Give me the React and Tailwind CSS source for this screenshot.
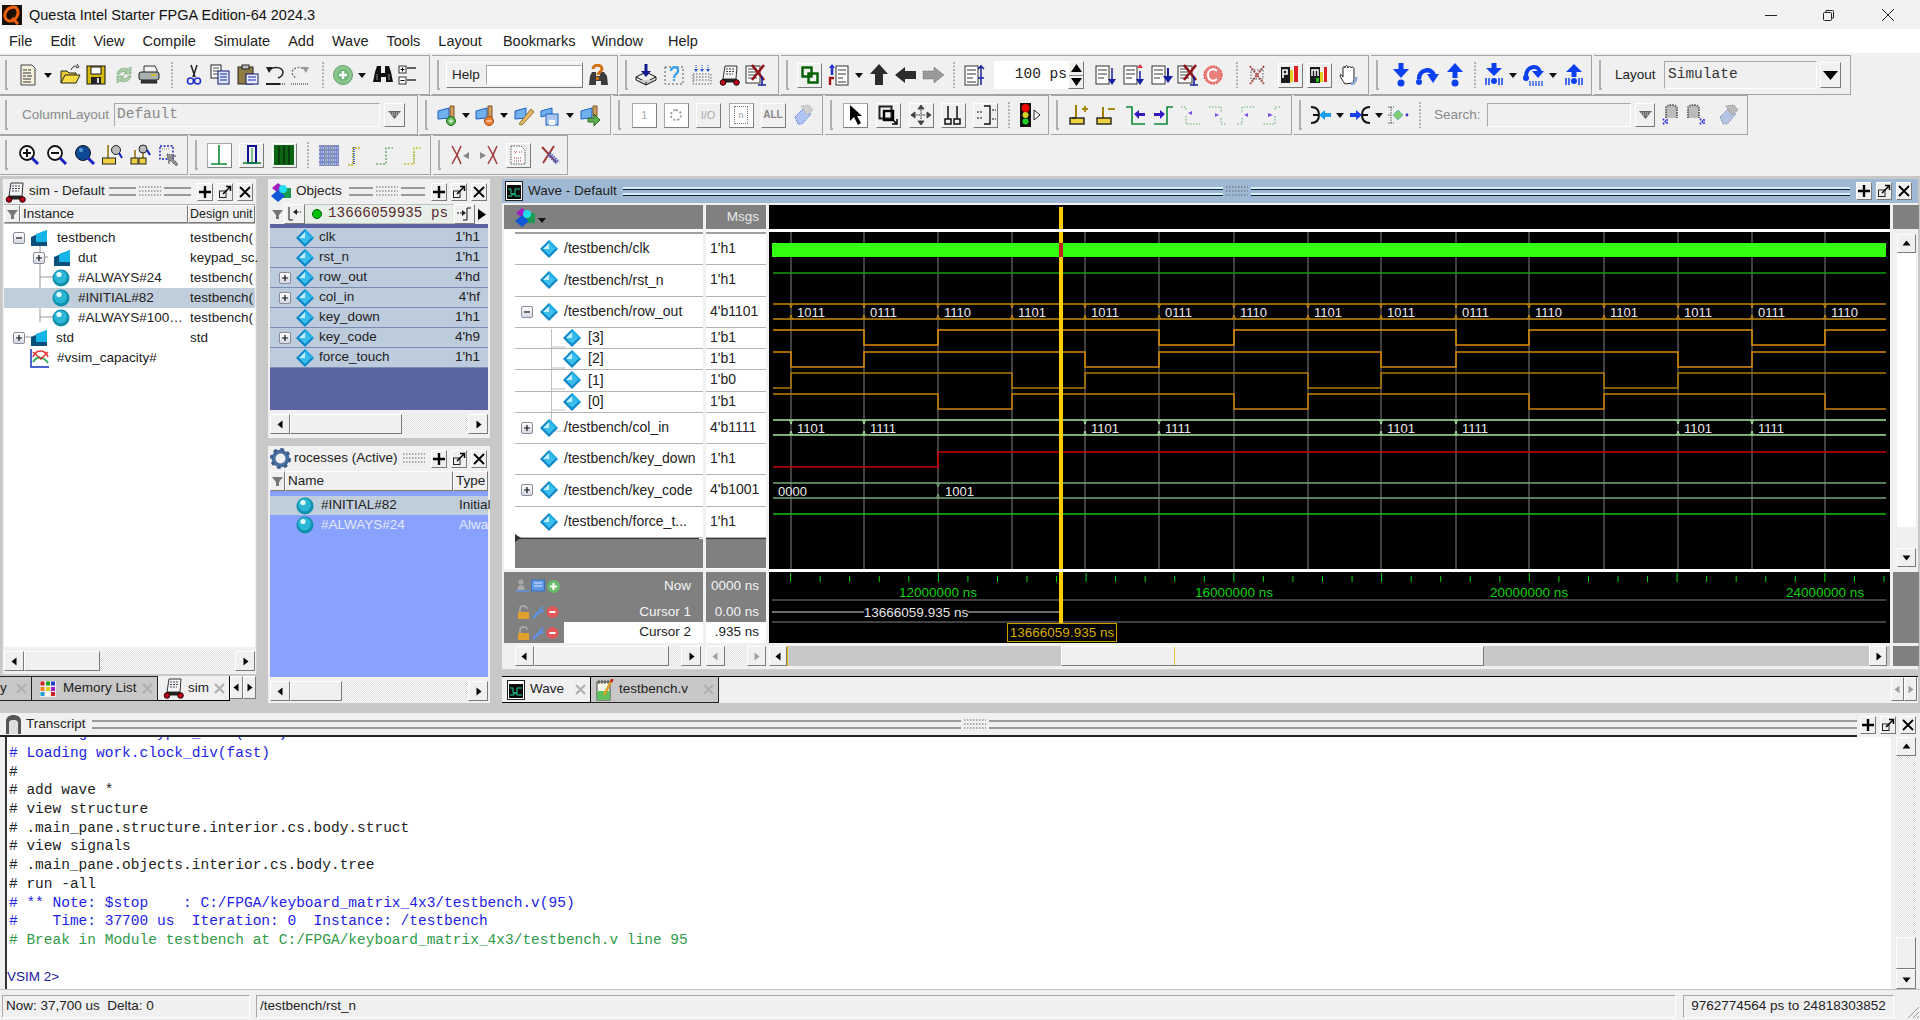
import React from 'react';

const Svg = ({ w = 22, h = 22, children }) => (
  <svg width={w} height={h} viewBox={`0 0 ${w} ${h}`} className="block flex-none">{children}</svg>
);

const raised = 'border border-t-white border-l-white border-r-[#7a7a7a] border-b-[#7a7a7a] bg-[#f0f0f0]';
const sunken = 'border border-t-[#a8a8a8] border-l-[#a8a8a8] border-r-white border-b-white';
const dither = 'bg-[repeating-conic-gradient(#ffffff_0_25%,#dcdcdc_0_50%)] bg-[length:2px_2px]';

const Diamond = () => (
  <Svg w={18} h={18}>
    <polygon points="9,0 18,9 9,18 0,9" fill="#0c86c8" />
    <polygon points="9,0 18,9 9,9" fill="#1fb0ea" />
    <polygon points="9,3 15,9 9,15 3,9" fill="#3dbdec" />
    <polygon points="3,9 9,3 9,9" fill="#c2f0ff" />
  </Svg>
);

const Ball = () => (
  <Svg w={18} h={18}>
    <circle cx="9" cy="9" r="8.5" fill="#0f8fac" />
    <circle cx="8.5" cy="8" r="6.5" fill="#2cb6d6" />
    <circle cx="7" cy="5.5" r="2.6" fill="#e4fbff" />
  </Svg>
);

const Cube = () => (
  <Svg w={17} h={17}>
    <polygon points="16,0 16,16 0,16 0,7" fill="#0a4f7c" />
    <polygon points="5,4 16,0 16,12 5,12" fill="#15b4e6" />
  </Svg>
);

const Expander = ({ minus }) => (
  <div className="w-[12px] h-[12px] flex-none rounded-[2px] border border-[#8a8a9a] bg-gradient-to-b from-white to-[#d4d8e4] flex items-center justify-center">
    <svg width="8" height="8" viewBox="0 0 8 8" className="block">
      <path d={minus ? 'M1 4h6' : 'M1 4h6M4 1v6'} stroke="#111" strokeWidth="1.2" />
    </svg>
  </div>
);

const Cart = () => (
  <Svg w={21} h={22}>
    <path d="M6 2h12l-1 13H4z" fill="#f5f5f5" stroke="#333" />
    <path d="M7 5h8M7 7.5h8M7 10h7" stroke="#445" strokeDasharray="2 1" />
    <path d="M4 15l-1 3h15l-1-3" fill="#222" stroke="#222" />
    <circle cx="4" cy="18.5" r="2.8" fill="#c00018" stroke="#200" />
    <circle cx="17.5" cy="18.5" r="2.8" fill="#c00018" stroke="#200" />
  </Svg>
);

const ObjIcon = () => (
  <Svg w={22} h={22}>
    <polygon points="8,2 14,7 8,12 2,7" fill="#a020c0" />
    <rect x="11" y="7" width="10" height="10" fill="#1c9a50" />
    <polygon points="8,9 15,15 8,21 1,15" fill="#1058d8" />
    <circle cx="13" cy="8" r="4" fill="#20e0f0" />
  </Svg>
);

const Gear = () => (
  <Svg w={21} h={21}>
    <circle cx="10.5" cy="10.5" r="7" fill="none" stroke="#4a6ea0" strokeWidth="4" />
    <circle cx="10.5" cy="10.5" r="9" fill="none" stroke="#3a5a8c" strokeWidth="3" strokeDasharray="3.5 3.5" />
    <circle cx="10.5" cy="10.5" r="2.6" fill="#f0f0f0" />
  </Svg>
);

const WaveIcon = () => (
  <Svg w={18} h={20}>
    <rect x="0.5" y="0.5" width="17" height="19" fill="#fff" stroke="#222" />
    <rect x="2" y="4" width="14" height="14" fill="#0a0a0a" />
    <path d="M3 8h3v5h4V8h5M3 15h4v-2h3v2h5" stroke="#22d090" fill="none" />
  </Svg>
);

const MiniBtn = ({ k }) => (
  <div className={`w-[16px] h-[18px] flex items-center justify-center flex-none ${raised}`}>
    {k === 'plus' && (
      <svg width="12" height="12" viewBox="0 0 12 12" className="block"><path d="M6 0v12M0 6h12" stroke="#000" strokeWidth="2.4" /></svg>
    )}
    {k === 'pop' && (
      <svg width="14" height="14" viewBox="0 0 14 14" className="block">
        <rect x="1.5" y="6" width="6.5" height="6.5" fill="none" stroke="#222" />
        <path d="M5 9l7-7M8 1.5h4.5V6" stroke="#000" strokeWidth="1.5" fill="none" />
      </svg>
    )}
    {k === 'x' && (
      <svg width="12" height="12" viewBox="0 0 12 12" className="block"><path d="M1 1l10 10M11 1L1 11" stroke="#000" strokeWidth="1.8" /></svg>
    )}
  </div>
);

const Buttons = () => (
  <div className="flex gap-[4px] flex-none">
    <MiniBtn k="plus" />
    <MiniBtn k="pop" />
    <MiniBtn k="x" />
  </div>
);

const DotPatch = () => (
  <svg width="22" height="11" viewBox="0 0 22 11" className="block flex-none">
    {[1, 5, 9].map((y) => (
      <path key={y} d={`M0 ${y}H22`} stroke="#666" strokeDasharray="1.5 1.5" />
    ))}
  </svg>
);

const GripLine = () => (
  <div className="flex-1 h-[9px] flex flex-col justify-between">
    <div className="h-[2px] bg-[#9a9a9a]" />
    <div className="h-[2px] bg-[#9a9a9a]" />
  </div>
);

const TitleGrip = ({ cls }) => (
  <div className={`flex items-center gap-[3px] ${cls}`}>
    <GripLine />
    <DotPatch />
    <GripLine />
  </div>
);

const BlueLine = () => (
  <div className="flex-1 h-[9px] flex flex-col justify-between">
    <div className="h-[3px] bg-[#d6f0ff] border-b border-[#14202c]" />
    <div className="h-[3px] bg-[#d6f0ff] border-b border-[#14202c]" />
  </div>
);

const Arrow = ({ dir, dim, cls = 'w-[19px] h-[19px]' }) => (
  <div className={`flex items-center justify-center flex-none ${raised} ${cls}`}>
    <svg width="9" height="9" viewBox="0 0 9 9" className="block">
      <polygon
        fill={dim ? '#a0a0a0' : '#000'}
        points={{ l: '6.5,0.5 6.5,8.5 1.5,4.5', r: '2.5,0.5 2.5,8.5 7.5,4.5', u: '0.5,6.5 8.5,6.5 4.5,1.5', d: '0.5,2.5 8.5,2.5 4.5,7.5' }[dir]}
      />
    </svg>
  </div>
);

const Dropdown = ({ k = 'dim', cls = 'w-[21px] h-[24px]' }) => (
  <div className={`flex items-center justify-center flex-none ${raised} ${cls}`}>
    {k === 'dim' ? (
      <svg width="13" height="8" viewBox="0 0 13 8" className="block"><polygon points="0,0 13,0 6.5,8" fill="#666" /><path d="M2 2h9M4 4h5" stroke="#ddd" strokeDasharray="1 1" /></svg>
    ) : (
      <svg width="15" height="9" viewBox="0 0 15 9" className="block"><polygon points="0,0 15,0 7.5,9" fill="#000" /></svg>
    )}
  </div>
);

// toolbar icons, roughly 22px boxes
const IC = {
  none: () => null,
  caret: () => <Svg w={8} h={5}><polygon points="0,0 8,0 4,5" fill="#111" /></Svg>,
  sep: () => <Svg w={2} h={26}><path d="M1 0v26" stroke="#777" strokeDasharray="2 1.5" /></Svg>,
  doc: () => (
    <Svg><path d="M4 1h11l3 3v17H4z" fill="#f5f0dc" stroke="#444" /><path d="M6 6h4M11 6h3M6 9h8M6 12h3M10 12h5M6 15h8M6 18h8" stroke="#333" /></Svg>
  ),
  open: () => (
    <Svg><path d="M2 19V7h6l2 2h7v3" fill="#e8cc30" stroke="#222" /><path d="M2 19l4-8h15l-4 8z" fill="#f6dc40" stroke="#222" /><path d="M12 6c1-3 3-4 6-4M18 0l2 3-3 1" stroke="#333" fill="none" /></Svg>
  ),
  save: () => (
    <Svg><rect x="2" y="2" width="18" height="18" fill="#d6bc08" stroke="#111" /><rect x="6" y="3" width="10" height="7" fill="#fff" stroke="#111" /><rect x="6" y="13" width="10" height="7" fill="#222" /><rect x="12" y="14" width="2" height="5" fill="#ddd" /></Svg>
  ),
  reload: () => (
    <Svg><path d="M4 10c1-5 6-7 11-5l3-2v7h-7l2-2c-3-1-6 0-7 3z" fill="#a8cca8" stroke="#7aa87a" strokeDasharray="1.5 1" /><path d="M18 12c-1 5-6 7-11 5l-3 2v-7h7l-2 2c3 1 6 0 7-3z" fill="#a8cca8" stroke="#7aa87a" strokeDasharray="1.5 1" /></Svg>
  ),
  print: () => (
    <Svg><path d="M6 8V2h11l2 4v2" fill="#f4f4f4" stroke="#333" /><rect x="1" y="8" width="20" height="8" rx="2" fill="#aab0b0" stroke="#222" /><path d="M4 16l-1 3h16l-1-3" fill="#333" stroke="#222" /><rect x="13" y="10" width="5" height="2" fill="#d4c020" /></Svg>
  ),
  cut: () => (
    <Svg><path d="M8 1l4 12M14 1l-4 12" stroke="#222" strokeWidth="1.5" /><circle cx="7.5" cy="17" r="3" fill="none" stroke="#2030d0" strokeWidth="1.6" /><circle cx="14.5" cy="17" r="3" fill="none" stroke="#2030d0" strokeWidth="1.6" /></Svg>
  ),
  copy: () => (
    <Svg><rect x="2" y="1" width="10" height="13" fill="#fff" stroke="#222" /><path d="M4 4h6M4 7h6M4 10h5" stroke="#444" /><rect x="9" y="7" width="11" height="13" fill="#dce8ff" stroke="#12126a" /><path d="M11 10h7M11 13h7M11 16h7" stroke="#1420a0" /></Svg>
  ),
  paste: () => (
    <Svg><rect x="1" y="3" width="15" height="17" fill="#8f7d44" stroke="#222" /><rect x="5" y="1" width="7" height="4" fill="#bbb" stroke="#222" /><rect x="9" y="10" width="12" height="10" fill="#e8f0ff" stroke="#11116a" /><path d="M11 13h8M11 16h8" stroke="#1420a0" /></Svg>
  ),
  undo: () => (
    <Svg><path d="M5 6c5-4 13-3 14 2 0 3-2 5-5 6" fill="none" stroke="#222" strokeWidth="1.5" /><polygon points="2,3 9,3 5,9" fill="#222" /><path d="M2 20h14" stroke="#222" strokeWidth="2" /><path d="M16 20h5" stroke="#777" strokeDasharray="1 1" strokeWidth="2" /></Svg>
  ),
  redo: () => (
    <Svg><path d="M17 6C12 2 4 3 3 8c0 3 2 5 5 6" fill="none" stroke="#777" strokeDasharray="2 1.5" strokeWidth="1.4" /><polygon points="20,3 13,3 17,9" fill="#999" /><path d="M2 20h18" stroke="#888" strokeDasharray="1 1" strokeWidth="2" /></Svg>
  ),
  add: () => (
    <Svg><circle cx="11" cy="11" r="9.5" fill="#8cc68c" stroke="#5f9f6f" /><circle cx="11" cy="11" r="6" fill="#72b87c" /><path d="M7 11h8M11 7v8" stroke="#fff" strokeWidth="2.4" /></Svg>
  ),
  binoc: () => (
    <Svg><path d="M3 8l2-6h4v7h4V2h4l2 6 2 10h-7V13H9v5H1z" fill="#111" /><path d="M5 10v6M17 10v6" stroke="#888" /></Svg>
  ),
  tree: () => (
    <Svg><rect x="2" y="2" width="7" height="7" fill="#fff" stroke="#333" /><path d="M3.5 5.5h4M5.5 3.5v4" stroke="#000" /><rect x="2" y="13" width="7" height="7" fill="#fff" stroke="#333" /><path d="M3.5 16.5h4" stroke="#000" /><path d="M10 4h9M10 16h9" stroke="#333" strokeWidth="1.4" /></Svg>
  ),
  helpb: () => (
    <Svg><path d="M3 12l2-4h4v4h4V8h4l3 4 1 9h-7v-4H9v4H2z" fill="#3c3c3c" /><path d="M6 5c0-5 9-5 9 0 0 3-4 3-4 6" fill="none" stroke="#d07010" strokeWidth="3" /><rect x="9" y="13" width="3" height="3" fill="#d07010" /></Svg>
  ),
  compile: () => (
    <Svg><path d="M1 13l10-5 10 5-10 5z" fill="#eee" stroke="#111" /><path d="M1 16l10 5 10-5M1 13v3M21 13v3M11 18v3" fill="#ccc" stroke="#111" /><path d="M11 0v10" stroke="#111a90" strokeWidth="3" /><polygon points="6,7 16,7 11,13" fill="#111a90" /></Svg>
  ),
  qbox: () => (
    <Svg><rect x="2" y="3" width="18" height="17" fill="none" stroke="#555" strokeDasharray="2 2" /><path d="M8 7c0-5 8-5 7 0 0 3-4 3-4 7" fill="none" stroke="#38a0f0" strokeWidth="2.4" /><rect x="10" y="15" width="2" height="2" fill="#38a0f0" /></Svg>
  ),
  dotgrid: () => (
    <Svg>
      <path d="M5 1v4M11 1v4M17 1v4" stroke="#2050d0" strokeDasharray="1 1" /><polygon points="3,5 7,5 5,8" fill="#2050d0" /><polygon points="9,5 13,5 11,8" fill="#2050d0" /><polygon points="15,5 19,5 17,8" fill="#2050d0" />
      <rect x="2" y="10" width="18" height="10" fill="none" stroke="#666" strokeDasharray="1.5 1.5" /><path d="M2 13h18M2 16h18" stroke="#666" strokeDasharray="1.5 1.5" />
    </Svg>
  ),
  cart: Cart,
  docx: () => (
    <Svg w={24}><rect x="2" y="2" width="14" height="17" fill="#fff" stroke="#333" /><path d="M4 5h9M4 8h9M4 11h9M4 14h9" stroke="#444" /><path d="M8 1l12 15M20 1L8 16" stroke="#8c1418" strokeWidth="2.6" /><path d="M18 12v9M14 21h8" stroke="#1420a0" strokeWidth="1.6" /></Svg>
  ),
  link: () => (
    <Svg w={18} h={18}><rect x="1.5" y="1.5" width="9" height="9" fill="none" stroke="#006000" strokeWidth="2.4" /><rect x="7.5" y="7.5" width="9" height="9" fill="none" stroke="#006000" strokeWidth="2.4" /></Svg>
  ),
  bus: () => (
    <Svg><path d="M5 2v9" stroke="#2030d0" strokeWidth="2.5" /><polygon points="2,4 8,4 5,0" fill="#2030d0" /><path d="M3 21v-7h4" stroke="#a01010" strokeWidth="2.4" fill="none" /><rect x="9" y="2" width="12" height="19" fill="#fff" stroke="#333" /><path d="M11 6h8M11 10h8M11 14h5M11 18h8" stroke="#333" /></Svg>
  ),
  up: () => <Svg><polygon points="11,0 20,10 15,10 15,21 7,21 7,10 2,10" fill="#2c2c2c" /></Svg>,
  left: () => <Svg><polygon points="0,11 10,3 10,7 21,7 21,15 10,15 10,19" fill="#2c2c2c" /></Svg>,
  right: () => <Svg><polygon points="22,11 12,3 12,7 1,7 1,15 12,15 12,19" fill="#999" stroke="#777" strokeDasharray="1 1" /></Svg>,
  rdoc: () => (
    <Svg><rect x="1" y="2" width="13" height="19" fill="#fff" stroke="#333" /><path d="M3 6h9M3 10h9M3 14h6M3 18h9" stroke="#333" /><path d="M17 1v20M14 5l3-3 3 3M14 14h6" stroke="#1420a0" strokeWidth="1.5" fill="none" /></Svg>
  ),
  rdown: () => (
    <Svg><rect x="1" y="2" width="13" height="18" fill="#fff" stroke="#333" /><path d="M3 6h9M3 10h9M3 14h6" stroke="#333" /><path d="M17 4v14" stroke="#1420a0" strokeWidth="1.5" /><polygon points="13,15 21,15 17,21" fill="#1420a0" /></Svg>
  ),
  rdown2: () => (
    <Svg><rect x="1" y="2" width="13" height="18" fill="#fff" stroke="#333" /><path d="M3 6h9M3 10h9M3 14h6" stroke="#333" /><path d="M17 7v11" stroke="#1420a0" strokeWidth="1.5" /><polygon points="14,4 20,4 17,0" fill="#e03040" /><polygon points="13,15 21,15 17,21" fill="#1420a0" /></Svg>
  ),
  rdown3: () => (
    <Svg><rect x="1" y="2" width="13" height="18" fill="#fff" stroke="#333" /><path d="M3 6h9M3 10h9M3 14h6" stroke="#333" /><path d="M17 4v10" stroke="#1420a0" strokeWidth="2" /><polygon points="12,12 22,12 17,19" fill="#1420a0" /></Svg>
  ),
  redc: () => (
    <Svg><circle cx="11" cy="11" r="9" fill="#e8807c" stroke="#e03020" strokeDasharray="2 1" /><path d="M15 7c-3-3-9-2-9 4s6 7 9 4" fill="none" stroke="#fff" strokeWidth="2" /></Svg>
  ),
  xdim: () => (
    <Svg><path d="M4 2l14 18M18 2L4 20" stroke="#b05050" strokeWidth="2" strokeDasharray="2 1" /><rect x="5" y="6" width="12" height="9" fill="none" stroke="#555" strokeDasharray="1.5 1.5" /></Svg>
  ),
  pchart: () => (
    <Svg><rect x="2" y="3" width="9" height="16" fill="#1a1a1a" /><path d="M4 14V6h4v4H4" stroke="#fff" strokeWidth="1.6" fill="none" /><rect x="11" y="6" width="3" height="12" fill="#e0d020" /><rect x="15" y="2" width="4" height="16" fill="#e02020" /></Svg>
  ),
  mchart: () => (
    <Svg><rect x="2" y="3" width="10" height="16" fill="#1a1a1a" /><path d="M4 12V6h6v6M7 6v6" stroke="#fff" strokeWidth="1.5" fill="none" /><rect x="12" y="8" width="3" height="10" fill="#e0d020" /><rect x="16" y="3" width="3" height="15" fill="#e02020" /><rect x="8" y="14" width="3" height="4" fill="#20c020" /></Svg>
  ),
  hand: () => (
    <Svg><path d="M7 20c-2-3-5-7-5-9 1-1 2 0 3 2V4c0-2 2-2 2 0 0-3 3-3 3 0 0-2 3-2 3 0 1-2 3-1 3 1v9c0 3-1 4-2 5z" fill="#fff" stroke="#222" /><path d="M13 20c3 0 5-3 5-7" stroke="#8aa8d8" strokeWidth="3" fill="none" /></Svg>
  ),
  t1: () => <div className="text-[11px] leading-none text-[#aaa] tracking-tighter">1</div>,
  t2: () => <div className="w-[12px] h-[12px] rounded-full border-2 border-dotted border-[#999]" />,
  t3: () => <div className="text-[11px] leading-none text-[#aaa]">I/O</div>,
  t4: () => <div className="w-[14px] h-[18px] border border-dotted border-[#777] text-[9px] leading-[16px] text-center text-[#999]">n</div>,
  t5: () => <div className="text-[10px] leading-none text-[#888] font-bold">ALL</div>,
  eraser: () => (
    <Svg><path d="M3 13l9-9 7 6-9 10H6z" fill="#b0c4f4" stroke="#5078e0" strokeDasharray="1.5 1" /><path d="M9 2l8-1 4 5-6 5z" fill="#cfcfcf" stroke="#aaa" strokeDasharray="1 1" /></Svg>
  ),
  wadd: () => (
    <Svg><path d="M2 7l11-3v10L2 15z" fill="#70b0ec" stroke="#1c60c0" /><path d="M14 2h4v12h-4z" fill="#d0a060" stroke="#805020" /><circle cx="15" cy="17" r="4.5" fill="#56b64a" stroke="#246a20" /><path d="M12.5 17h5M15 14.5v5" stroke="#fff" /></Svg>
  ),
  wdel: () => (
    <Svg><path d="M2 7l11-3v10L2 15z" fill="#70b0ec" stroke="#1c60c0" /><path d="M14 2h4v12h-4z" fill="#d0a060" stroke="#805020" /><circle cx="15" cy="17" r="4.5" fill="#f08030" stroke="#a04810" /><path d="M12.5 17h5" stroke="#fff" /></Svg>
  ),
  wedit: () => (
    <Svg><path d="M2 7l11-3v10L2 15z" fill="#70b0ec" stroke="#1c60c0" /><path d="M6 20L18 5l3 3-12 13z" fill="#e8b860" stroke="#907030" /></Svg>
  ),
  wsave: () => (
    <Svg><path d="M2 7l11-3v6L2 13z" fill="#70b0ec" stroke="#1c60c0" /><rect x="7" y="10" width="12" height="11" fill="#a8c8f0" stroke="#1c60c0" /><rect x="10" y="16" width="6" height="5" fill="#fff" /></Svg>
  ),
  wload: () => (
    <Svg><path d="M2 7l11-3v10L2 15z" fill="#70b0ec" stroke="#1c60c0" /><path d="M14 2h4v10h-4z" fill="#d0a060" stroke="#805020" /><polygon points="9,14 15,14 15,10 21,16 15,22 15,18 9,18" fill="#60ac50" stroke="#246a20" /></Svg>
  ),
  ptr: () => <Svg w={18} h={22}><polygon points="4,1 4,17 8,13 12,21 15,19 11,12 16,12" fill="#000" /></Svg>,
  zbox: () => (
    <Svg w={20} h={20}><rect x="1.5" y="1.5" width="12" height="12" fill="none" stroke="#222" strokeWidth="2" /><rect x="6" y="6" width="9" height="9" fill="none" stroke="#000" strokeWidth="2.4" /><path d="M14 14l5 5M19 14v5h-5" stroke="#000" strokeWidth="1.5" fill="none" /></Svg>
  ),
  mv: () => (
    <Svg><path d="M11 1l3 4h-6zM11 21l3-4h-6zM1 11l4-3v6zM21 11l-4-3v6z" fill="#444" stroke="#444" /><path d="M6 11h10M11 6v10" stroke="#888" strokeDasharray="1.5 1" strokeWidth="2" /></Svg>
  ),
  two: () => (
    <Svg><path d="M6 2v13M15 2v13" stroke="#111" strokeWidth="1.5" /><rect x="3" y="15" width="6" height="5" fill="none" stroke="#111" strokeWidth="1.5" /><rect x="12" y="15" width="6" height="5" fill="none" stroke="#111" strokeWidth="1.5" /></Svg>
  ),
  arr: () => (
    <Svg><path d="M9 2h6v18H9" fill="none" stroke="#111" strokeWidth="1.4" /><path d="M2 8h5M2 14h5" stroke="#111" strokeDasharray="2 1" /><path d="M17 6h4M17 15h4" stroke="#111" strokeDasharray="2 1" /></Svg>
  ),
  light: () => (
    <Svg w={26} h={26}><rect x="3" y="1" width="11" height="24" fill="#111" /><circle cx="8.5" cy="6" r="4" fill="#f00000" /><circle cx="8.5" cy="13" r="3" fill="#d8d020" /><circle cx="8.5" cy="19.5" r="3" fill="#20d020" /><path d="M17 8l6 5-6 5z" fill="#fff" stroke="#222" /></Svg>
  ),
  cur1: () => (
    <Svg><path d="M8 1v14" stroke="#a08000" strokeWidth="2" /><rect x="2" y="14" width="14" height="6" fill="#f0d040" stroke="#222" strokeWidth="1.4" /><path d="M8 14H4" stroke="#111" /><path d="M14 5h6M17 2v6" stroke="#a88c10" strokeWidth="2" /></Svg>
  ),
  cur2: () => (
    <Svg><path d="M8 3v11" stroke="#a08000" strokeWidth="2" /><rect x="2" y="14" width="14" height="6" fill="#f0d040" stroke="#222" strokeWidth="1.4" /><path d="M13 5h7" stroke="#a88c10" strokeWidth="2" /></Svg>
  ),
  gl: () => <Svg><path d="M2 3h6v17H21" fill="none" stroke="#108838" strokeWidth="1.6" /><polygon points="10,10 15,6 15,9 21,9 21,12 15,12 15,15" fill="#3818c0" /></Svg>,
  gr: () => <Svg><path d="M21 3h-6v17H2" fill="none" stroke="#108838" strokeWidth="1.6" /><polygon points="13,10 8,6 8,9 2,9 2,12 8,12 8,15" fill="#3818c0" /></Svg>,
  dg1: () => <Svg><path d="M2 3h5v4M7 12v8h14" fill="none" stroke="#60b070" strokeDasharray="1.5 1.5" /><polygon points="9,9 13,7 13,11" fill="#8050e0" /></Svg>,
  dg2: () => <Svg><path d="M2 3h12v6M14 14v6h6" fill="none" stroke="#60b070" strokeDasharray="1.5 1.5" /><polygon points="12,11 8,9 8,13" fill="#8050e0" /></Svg>,
  dg3: () => <Svg><path d="M20 3H8v6M8 14v6H2" fill="none" stroke="#60b070" strokeDasharray="1.5 1.5" /><polygon points="10,11 14,9 14,13" fill="#8050e0" /></Svg>,
  dg4: () => <Svg><path d="M20 3h-5v4M15 12v8H2" fill="none" stroke="#60b070" strokeDasharray="1.5 1.5" /><polygon points="13,11 8,9 8,13" fill="#8050e0" /></Svg>,
  ebl: () => (
    <Svg><path d="M1 3c6 0 8 3 8 8s-2 8-8 8M3 11h5" fill="none" stroke="#111" strokeWidth="2" /><polygon points="9,11 15,6 15,9 21,9 21,13 15,13 15,16" fill="#18a0f0" /></Svg>
  ),
  ebr: () => (
    <Svg><path d="M21 3c-6 0-8 3-8 8s2 8 8 8M14 11h5" fill="none" stroke="#111" strokeWidth="2" /><polygon points="13,11 7,6 7,9 1,9 1,13 7,13 7,16" fill="#1840f0" /></Svg>
  ),
  dcross: () => (
    <Svg><path d="M1 3h6M1 11h3M1 19h6M4 3v16" stroke="#555" strokeDasharray="1.5 1" /><polygon points="11,6 16,11 11,16 6,11" fill="#80d070" stroke="#3090d0" strokeDasharray="1 1" /><circle cx="20" cy="11" r="1.4" fill="#3030d0" /></Svg>
  ),
  fl: () => (
    <Svg><path d="M5 14V4c0-4 11-4 11 0v10" fill="#bbb" stroke="#666" strokeDasharray="1.5 1" strokeWidth="2" /><path d="M2 20l5-5M2 15l5 5" stroke="#3030e0" strokeWidth="2" strokeDasharray="1.5 1" /></Svg>
  ),
  fr: () => (
    <Svg><path d="M3 14V4c0-4 11-4 11 0v10" fill="#bbb" stroke="#666" strokeDasharray="1.5 1" strokeWidth="2" /><path d="M15 20l5-5M15 15l5 5" stroke="#3030e0" strokeWidth="2" strokeDasharray="1.5 1" /></Svg>
  ),
  fx: () => (
    <Svg><path d="M3 13l9-9 7 6-9 10H6z" fill="#b4c4e0" stroke="#8090b0" strokeDasharray="1.5 1" /><path d="M9 2l8-1 4 5-6 5z" fill="#bbb" stroke="#888" strokeDasharray="1 1" /></Svg>
  ),
  stepin: () => (
    <Svg w={16} h={24}><rect x="5.5" y="0" width="5" height="7" fill="#0a40f0" /><polygon points="0,6 16,6 8,15" fill="#0a40f0" /><circle cx="8" cy="20" r="3.5" fill="#0a40f0" /></Svg>
  ),
  stepover: () => (
    <Svg w={24} h={20}><path d="M4 14c0-10 13-12 15-3" fill="none" stroke="#0a40f0" strokeWidth="4.5" /><polygon points="12,9 24,9 18,18" fill="#0a40f0" /><circle cx="4" cy="17" r="3" fill="#0a40f0" /></Svg>
  ),
  stepout: () => (
    <Svg w={16} h={24}><polygon points="0,9 16,9 8,0" fill="#0a40f0" /><rect x="5.5" y="8" width="5" height="7" fill="#0a40f0" /><circle cx="8" cy="20" r="3.5" fill="#0a40f0" /></Svg>
  ),
  stepin2: () => (
    <Svg w={18} h={24}><rect x="6.5" y="0" width="5" height="6" fill="#0a40f0" /><polygon points="1,5 17,5 9,13" fill="#0a40f0" /><circle cx="9" cy="18" r="3" fill="#0a40f0" /><path d="M1 15v7M4 15v7M14 15v7M17 15v7" stroke="#0a40f0" strokeWidth="1.5" /></Svg>
  ),
  stepover2: () => (
    <Svg w={22} h={24}><path d="M4 13C4 3 16 1 18 9" fill="none" stroke="#0a40f0" strokeWidth="4" /><polygon points="10,8 22,8 16,15" fill="#0a40f0" /><circle cx="4" cy="15" r="3" fill="#0a40f0" /><path d="M8 18v5M11 18v5M14 18v5M17 18v5M20 18v5" stroke="#0a40f0" strokeWidth="1.2" /></Svg>
  ),
  stepout2: () => (
    <Svg w={18} h={24}><polygon points="1,9 17,9 9,1" fill="#0a40f0" /><rect x="6.5" y="8" width="5" height="6" fill="#0a40f0" /><circle cx="9" cy="18" r="3" fill="#0a40f0" /><path d="M1 15v7M4 15v7M14 15v7M17 15v7" stroke="#0a40f0" strokeWidth="1.5" /></Svg>
  ),
  zin: () => (
    <Svg><circle cx="9" cy="9" r="7" fill="#fff" stroke="#111" strokeWidth="1.8" /><path d="M5 9h8M9 5v8" stroke="#111" strokeWidth="2" /><path d="M14 14l6 6" stroke="#1420c0" strokeWidth="3" /></Svg>
  ),
  zout: () => (
    <Svg><circle cx="9" cy="9" r="7" fill="#fff" stroke="#111" strokeWidth="1.8" /><path d="M5 9h8" stroke="#111" strokeWidth="2" /><path d="M14 14l6 6" stroke="#1420c0" strokeWidth="3" /></Svg>
  ),
  zfull: () => (
    <Svg><circle cx="9" cy="9" r="7.5" fill="#0c4a98" stroke="#111" /><circle cx="7" cy="6" r="2" fill="#5c9ad8" /><path d="M14 14l6 6" stroke="#1420c0" strokeWidth="3" /></Svg>
  ),
  zc1: () => (
    <Svg><path d="M6 1v14" stroke="#8a7000" strokeWidth="1.5" /><rect x="0.5" y="14" width="13" height="6" fill="#f0d040" stroke="#222" /><circle cx="14" cy="6" r="4.5" fill="#bbb" stroke="#222" /><path d="M17 9l3 5" stroke="#1420c0" strokeWidth="2" /></Svg>
  ),
  zc2: () => (
    <Svg><path d="M5 6v9M13 6v9" stroke="#8a7000" strokeWidth="1.5" /><rect x="1" y="14" width="7" height="6" fill="#f0d040" stroke="#222" /><rect x="9" y="14" width="7" height="6" fill="#f0d040" stroke="#222" /><circle cx="13" cy="5" r="4" fill="#bbb" stroke="#222" /><path d="M17 6l3 5" stroke="#1420c0" strokeWidth="2" /></Svg>
  ),
  zsel: () => (
    <Svg><rect x="2" y="2" width="13" height="13" fill="none" stroke="#1420c0" strokeDasharray="2 1.5" strokeWidth="1.4" /><path d="M4 5h8" stroke="#888" strokeDasharray="1 1" /><polygon points="9,10 18,12 14,14 20,20 18,22 12,16 11,20" fill="#909090" stroke="#444" strokeDasharray="1 1" /></Svg>
  ),
  w1: () => <Svg><path d="M11 1v19M3 20h16" stroke="#108838" strokeWidth="1.6" /></Svg>,
  w2: () => <Svg><rect x="7" y="2" width="8" height="17" fill="none" stroke="#101090" strokeWidth="2" /><path d="M2 19h18" stroke="#108838" strokeWidth="1.6" /><path d="M11 4v15" stroke="#108838" /></Svg>,
  w3: () => <Svg><rect x="1" y="1" width="20" height="20" fill="#0a6414" /><path d="M6 2v18M11 2v18M16 2v18" stroke="#04300a" strokeWidth="1.5" /></Svg>,
  wdots: () => <Svg><rect x="1" y="1" width="20" height="21" fill="#7c88c8" /><path d="M1 4h20M1 8h20M1 12h20M1 16h20M1 20h20" stroke="#f4f4ff" strokeDasharray="1 1" /><path d="M8 1v21M14 1v21" stroke="#88b088" /></Svg>,
  e1: () => <Svg><path d="M3 21h5V4h7" fill="none" stroke="#b8b020" strokeDasharray="2 1" strokeWidth="1.6" /><path d="M9 3v17" stroke="#406cd0" strokeDasharray="1 1" strokeWidth="2" /></Svg>,
  e2: () => <Svg><path d="M3 20h10V4h7" fill="none" stroke="#70b070" strokeDasharray="2 1.5" strokeWidth="1.6" /></Svg>,
  e3: () => <Svg><path d="M3 20h10V4h7" fill="none" stroke="#c4c430" strokeDasharray="2 1.5" strokeWidth="1.6" /><path d="M13 8v12" stroke="#88a030" strokeDasharray="1 1" /></Svg>,
  xl: () => <Svg><path d="M2 2l5 9-5 9M11 2L7 11l4 9" fill="none" stroke="#a03838" strokeWidth="1.5" /><polygon points="13,8 13,15 19,11" fill="#888" transform="rotate(180 16 11.5)" /></Svg>,
  xr: () => <Svg><polygon points="3,8 3,15 9,11.5" fill="#888" /><path d="M11 2l5 9-5 9M20 2l-4 9 4 9" fill="none" stroke="#a03838" strokeWidth="1.5" /></Svg>,
  xd: () => <Svg w={16} h={20}><path d="M1 1h10l4 4v14H1z" fill="#fff" stroke="#555" strokeDasharray="1.5 1" /><path d="M4 6l3 3M7 6L4 9M9 7h4M4 13h8M4 16h8" stroke="#b04040" strokeDasharray="1 1" /></Svg>,
  xw: () => <Svg><path d="M3 3l14 15M15 2L4 19" stroke="#a03838" strokeWidth="2" /><path d="M10 10l9 9" stroke="#5060c0" strokeWidth="5" strokeDasharray="1.5 1" /></Svg>,
};

const Slots = ({ items }) =>
  items.map(([w, name, btn], i) => {
    const Icon = IC[name];
    return (
      <div key={i} className={`${w} flex-none flex items-center justify-center`}>
        {btn ? (
          <div className={`w-[25px] h-[25px] flex items-center justify-center ${btn === 'w' ? 'bg-white border border-t-[#a8a8a8] border-l-[#a8a8a8] border-r-[#808080] border-b-[#808080]' : raised}`}>
            <Icon />
          </div>
        ) : (
          <Icon />
        )}
      </div>
    );
  });

const Bar = ({ cls, children }) => (
  <div className={`flex-none h-[40px] ${cls}`}>
    <div className="h-full mr-[2px] border border-l-0 border-[#a4a4a4] border-t-[#a4a4a4] flex items-center">
      <div className="w-[3px] h-[30px] ml-[5px] mr-[2px] border-l-2 border-b-2 border-[#b0b0b0] flex-none" />
      {children}
    </div>
  </div>
);

const Row1 = () => (
  <div className="flex">
    <Bar cls="w-[432px]">
      <div className="w-[7px] flex-none" />
      <Slots items={[['w-[21px]', 'doc'], ['w-[20px]', 'caret'], ['w-[24px]', 'open'], ['w-[28px]', 'save'], ['w-[27px]', 'reload'], ['w-[24px]', 'print'], ['w-[21px]', 'sep'], ['w-[24px]', 'cut'], ['w-[28px]', 'copy'], ['w-[28px]', 'paste'], ['w-[26px]', 'undo'], ['w-[24px]', 'redo'], ['w-[21px]', 'sep'], ['w-[19px]', 'add'], ['w-[19px]', 'caret'], ['w-[24px]', 'binoc'], ['w-[26px]', 'tree']]} />
    </Bar>
    <Bar cls="w-[188px]">
      <div className="w-[4px] flex-none" />
      <div className={`w-[137px] h-[26px] flex items-center flex-none ${raised}`}>
        <span className="ml-[5px] w-[34px] text-[13.5px] text-[#222]">Help</span>
        <div className={`w-[96px] h-[20px] bg-white ${sunken}`} />
      </div>
      <Slots items={[['w-[30px]', 'helpb']]} />
    </Bar>
    <Bar cls="w-[161px]">
      <div className="w-[2px] flex-none" />
      <Slots items={[['w-[28px]', 'compile'], ['w-[28px]', 'qbox'], ['w-[27px]', 'dotgrid'], ['w-[28px]', 'cart'], ['w-[26px]', 'docx']]} />
    </Bar>
    <Bar cls="w-[590px]">
      <div className="w-[4px] flex-none" />
      <Slots items={[['w-[29px]', 'link', true], ['w-[28px]', 'bus'], ['w-[14px]', 'caret'], ['w-[26px]', 'up'], ['w-[27px]', 'left'], ['w-[27px]', 'right'], ['w-[16px]', 'sep'], ['w-[26px]', 'rdoc']]} />
      <div className="w-[74px] h-[28px] ml-[6px] bg-white flex-none flex items-center justify-end font-['Liberation_Mono',monospace] text-[14.5px] text-[#222] pr-[1px]">100 ps</div>
      <div className={`w-[16px] h-[28px] flex-none flex flex-col items-center justify-between py-[2px] ${raised}`}>
        <svg width="11" height="8" viewBox="0 0 11 8" className="block"><polygon points="0,8 11,8 5.5,0" fill="#000" /></svg>
        <div className="w-full h-px bg-[#888]" />
        <svg width="11" height="8" viewBox="0 0 11 8" className="block"><polygon points="0,0 11,0 5.5,8" fill="#000" /></svg>
      </div>
      <div className="w-[8px] flex-none" />
      <Slots items={[['w-[28px]', 'rdown'], ['w-[28px]', 'rdown2'], ['w-[27px]', 'rdown3'], ['w-[25px]', 'docx'], ['w-[26px]', 'redc'], ['w-[22px]', 'sep'], ['w-[18px]', 'xdim'], ['w-[8px]', 'none'], ['w-[32px]', 'pchart', true], ['w-[26px]', 'mchart', true], ['w-[34px]', 'hand']]} />
    </Bar>
    <Bar cls="w-[223px]">
      <div className="w-[7px] flex-none" />
      <Slots items={[['w-[25px]', 'stepin'], ['w-[28px]', 'stepover'], ['w-[27px]', 'stepout'], ['w-[14px]', 'sep'], ['w-[24px]', 'stepin2'], ['w-[14px]', 'caret'], ['w-[26px]', 'stepover2'], ['w-[14px]', 'caret'], ['w-[28px]', 'stepout2']]} />
    </Bar>
    <Bar cls="w-[259px]">
      <span className="ml-[11px] w-[49px] flex-none text-[13.5px] text-[#222]">Layout</span>
      <div className={`w-[153px] h-[28px] flex-none flex items-center pl-[3px] font-['Liberation_Mono',monospace] text-[14.5px] text-[#333] ${sunken}`}>Simulate</div>
      <Dropdown k="solid" cls="ml-[3px] w-[21px] h-[26px]" />
    </Bar>
  </div>
);

const Row2 = () => (
  <div className="flex">
    <Bar cls="w-[420px]">
      <span className="ml-[12px] w-[92px] flex-none text-[13.5px] text-[#8a8a8a]">ColumnLayout</span>
      <div className={`w-[266px] h-[24px] flex-none flex items-center pl-[2px] font-['Liberation_Mono',monospace] text-[14.5px] text-[#888] ${sunken}`}>Default</div>
      <Dropdown cls="ml-[4px] w-[21px] h-[24px]" />
    </Bar>
    <Bar cls="w-[193px]">
      <div className="w-[6px] flex-none" />
      <Slots items={[['w-[22px]', 'wadd'], ['w-[15px]', 'caret'], ['w-[24px]', 'wdel'], ['w-[14px]', 'caret'], ['w-[26px]', 'wedit'], ['w-[26px]', 'wsave'], ['w-[14px]', 'caret'], ['w-[26px]', 'wload']]} />
    </Bar>
    <Bar cls="w-[212px]">
      <div className="w-[5px] flex-none" />
      <Slots items={[['w-[32px]', 't1', 'w'], ['w-[32px]', 't2', 'w'], ['w-[32px]', 't3', true], ['w-[34px]', 't4', 'w'], ['w-[30px]', 't5', true], ['w-[30px]', 'eraser']]} />
    </Bar>
    <Bar cls="w-[226px]">
      <div className="w-[4px] flex-none" />
      <Slots items={[['w-[32px]', 'ptr', 'w'], ['w-[34px]', 'zbox', true], ['w-[32px]', 'mv', true], ['w-[32px]', 'two', true], ['w-[33px]', 'arr', true], ['w-[14px]', 'sep'], ['w-[28px]', 'light']]} />
    </Bar>
    <Bar cls="w-[243px]">
      <div className="w-[5px] flex-none" />
      <Slots items={[['w-[26px]', 'cur1'], ['w-[28px]', 'cur2'], ['w-[30px]', 'gl'], ['w-[26px]', 'gr'], ['w-[27px]', 'dg1'], ['w-[29px]', 'dg2'], ['w-[25px]', 'dg3'], ['w-[27px]', 'dg4']]} />
    </Bar>
    <Bar cls="w-[456px]">
      <div className="w-[5px] flex-none" />
      <Slots items={[['w-[24px]', 'ebl'], ['w-[14px]', 'caret'], ['w-[26px]', 'ebr'], ['w-[12px]', 'caret'], ['w-[26px]', 'dcross'], ['w-[18px]', 'sep']]} />
      <span className="ml-[5px] w-[53px] flex-none text-[13.5px] text-[#8a8a8a]">Search:</span>
      <div className={`w-[144px] h-[24px] flex-none ${sunken}`} />
      <Dropdown cls="ml-[4px] w-[20px] h-[24px]" />
      <div className="w-[5px] flex-none" />
      <Slots items={[['w-[24px]', 'fl'], ['w-[24px]', 'fr'], ['w-[6px]', 'none'], ['w-[28px]', 'fx']]} />
    </Bar>
  </div>
);

const Row3 = () => (
  <div className="flex">
    <Bar cls="w-[190px]">
      <div className="w-[5px] flex-none" />
      <Slots items={[['w-[28px]', 'zin'], ['w-[28px]', 'zout'], ['w-[28px]', 'zfull'], ['w-[28px]', 'zc1'], ['w-[28px]', 'zc2'], ['w-[28px]', 'zsel']]} />
    </Bar>
    <Bar cls="w-[243px]">
      <div className="w-[3px] flex-none" />
      <Slots items={[['w-[32px]', 'w1', 'w'], ['w-[33px]', 'w2', true], ['w-[32px]', 'w3', true], ['w-[16px]', 'sep'], ['w-[26px]', 'wdots'], ['w-[28px]', 'e1'], ['w-[28px]', 'e2'], ['w-[27px]', 'e3']]} />
    </Bar>
    <Bar cls="w-[137px]">
      <div className="w-[5px] flex-none" />
      <Slots items={[['w-[26px]', 'xl'], ['w-[28px]', 'xr'], ['w-[32px]', 'xd', true], ['w-[32px]', 'xw']]} />
    </Bar>
  </div>
);

const HScroll = ({ cls, thumbCls, leftDim, rightDim }) => (
  <div className={`flex items-stretch h-[20px] ${dither} ${cls}`}>
    <Arrow dir="l" dim={leftDim} cls="w-[20px]" />
    <div className={`${raised} ${thumbCls}`} />
    <div className="flex-1" />
    <Arrow dir="r" dim={rightDim} cls="w-[20px]" />
  </div>
);

const PaneHead = ({ children }) => (
  <div className="h-[25px] flex items-center pl-[2px] pr-[3px] bg-[#f0f0f0] text-[13.5px] text-[#222]">{children}</div>
);

const Filter = () => (
  <svg width="11" height="11" viewBox="0 0 11 11" className="block flex-none"><polygon points="0,1 11,1 7,6 7,10 4,10 4,6" fill="#777" /></svg>
);

const simRows = [
  { l: 'testbench', u: 'testbench(', ex: 'minus', d: 0 },
  { l: 'dut', u: 'keypad_sc.', ex: 'plus', d: 1 },
  { l: '#ALWAYS#24', u: 'testbench(', d: 1 },
  { l: '#INITIAL#82', u: 'testbench(', d: 1, sel: true },
  { l: '#ALWAYS#100…', u: 'testbench(', d: 1 },
  { l: 'std', u: 'std', ex: 'plus', d: 0 },
];

const SimPane = () => (
  <div className="w-[255px] h-[495px] ml-[2px] mt-[3px] bg-[#f0f0f0] flex flex-col border-l border-r border-[#d0d0d0] flex-none">
    <PaneHead>
      <Cart />
      <span className="ml-[3px] w-[80px] flex-none">sim - Default</span>
      <TitleGrip cls="flex-1 mr-[6px]" />
      <Buttons />
    </PaneHead>
    <div className="h-[20px] flex text-[13.5px] text-[#222] mx-[1px] border-y border-[#b0b0b0]">
      <div className={`w-[16px] flex items-center justify-center flex-none ${raised}`}><Filter /></div>
      <div className={`w-[168px] pl-[2px] flex items-center flex-none ${raised}`}>Instance</div>
      <div className={`flex-1 pl-[1px] flex items-center overflow-hidden whitespace-nowrap text-[12.5px] ${raised}`}>Design unit</div>
    </div>
    <div className="flex-1 bg-white pt-[4px] mx-[1px] relative text-[13.5px] text-[#222]">
      <svg width="60" height="110" viewBox="0 0 60 110" className="absolute left-[5px] top-[10px]">
        <path d="M31 8v80M31 23h8M31 43h20M31 63h20M31 83h20M15 103h8" stroke="#999" strokeWidth="1" fill="none" />
      </svg>
      {simRows.map((r) => (
        <div key={r.l} className={`relative h-[20px] flex items-center ${r.sel ? 'bg-[#c0cdda]' : ''}`}>
          <div className="flex items-center flex-none w-[186px]">
            {r.d === 0 ? (
              <>
                <div className="w-[9px] flex-none" />
                <Expander minus={r.ex === 'minus'} />
                <div className="w-[6px] flex-none" />
                <Cube />
                <span className={r.l === 'std' ? 'ml-[8px]' : 'ml-[9px]'}>{r.l}</span>
              </>
            ) : (
              <>
                {r.ex ? (
                  <>
                    <div className="w-[29px] flex-none" />
                    <Expander />
                    <div className="w-[9px] flex-none" />
                    <Cube />
                    <span className="ml-[7px]">{r.l}</span>
                  </>
                ) : (
                  <>
                    <div className="w-[48px] flex-none" />
                    <Ball />
                    <span className="ml-[8px]">{r.l}</span>
                  </>
                )}
              </>
            )}
          </div>
          <span className="whitespace-nowrap">{r.u}</span>
        </div>
      ))}
      <div className="h-[20px] flex items-center">
        <div className="w-[26px] flex-none" />
        <svg width="20" height="20" viewBox="0 0 20 20" className="block flex-none">
          <path d="M1 1v18h18" fill="none" stroke="#1030c0" strokeWidth="1.5" />
          <path d="M3 14c4-6 10-6 15 1" fill="none" stroke="#30b050" strokeWidth="2" />
          <path d="M3 4l8 7 7-7M3 9c3-8 12-8 15 0" fill="none" stroke="#e03030" strokeWidth="1.5" />
        </svg>
        <span className="ml-[7px]">#vsim_capacity#</span>
      </div>
    </div>
    <HScroll cls="mx-[1px] mt-[4px] mb-[3px]" thumbCls="w-[76px]" />
  </div>
);

const Tab = ({ cls, active, icon, label, labelCls }) => (
  <div className={`h-[25px] flex items-center flex-none text-[13.5px] text-[#222] ${active ? 'bg-[#f0f0f0] border-b border-r border-black' : 'bg-[#c8c8c8] border-t border-r border-b border-[#222]'} ${cls}`}>
    {icon}
    <span className={labelCls}>{label}</span>
    <svg width="11" height="11" viewBox="0 0 11 11" className="block ml-auto mr-[4px] flex-none"><path d="M1 1l9 9M10 1l-9 9" stroke="#b0b0b0" strokeWidth="2.2" /></svg>
  </div>
);

const SimTabs = () => (
  <div className="h-[25px] mt-[2px] flex">
    <Tab cls="w-[32px]" label="y" labelCls="" />
    <Tab
      cls="w-[126px]"
      icon={
        <svg width="16" height="16" viewBox="0 0 16 16" className="block ml-[8px] flex-none">
          <rect width="16" height="16" fill="#eee" />
          <rect x="0.5" y="0.5" width="4" height="4" fill="#d02020" /><rect x="6" y="0.5" width="4" height="4" fill="#20a020" /><rect x="11" y="0.5" width="4" height="4" fill="#2040d0" />
          <rect x="0.5" y="6" width="4" height="4" fill="#f08020" /><rect x="6" y="6" width="4" height="4" fill="#e0d020" /><rect x="11" y="6" width="4" height="4" fill="#a020c0" />
          <rect x="0.5" y="11" width="4" height="4" fill="#20a0d0" /><rect x="6" y="11" width="4" height="4" fill="#fff" /><rect x="11" y="11" width="4" height="4" fill="#d02020" />
        </svg>
      }
      label="Memory List"
      labelCls="ml-[7px] whitespace-nowrap"
    />
    <Tab active cls="w-[72px]" icon={<div className="ml-[5px] flex-none"><Cart /></div>} label="sim" labelCls="ml-[4px]" />
    <Arrow dir="l" cls="w-[13px] h-[23px]" />
    <Arrow dir="r" cls="w-[13px] h-[23px]" />
  </div>
);

const objRows = [
  ['clk', "1'h1"], ['rst_n', "1'h1"], ['row_out', "4'hd", true], ['col_in', "4'hf", true],
  ['key_down', "1'h1"], ['key_code', "4'h9", true], ['force_touch', "1'h1"],
];

const ObjectsPane = () => (
  <div className="h-[259px] mt-[3px] bg-[#f0f0f0] flex flex-col flex-none">
    <PaneHead>
      <ObjIcon />
      <span className="ml-[4px] w-[47px] flex-none">Objects</span>
      <TitleGrip cls="flex-1 mr-[6px] ml-[6px]" />
      <Buttons />
    </PaneHead>
    <div className="h-[20px] flex items-center mx-[2px]">
      <div className="w-[14px] flex justify-center flex-none"><Filter /></div>
      <div className={`w-[21px] h-[20px] flex items-center justify-center flex-none bg-[#e8efe8] ${raised}`}>
        <svg width="15" height="15" viewBox="0 0 15 15" className="block"><path d="M2 0v13h4" stroke="#111" fill="none" /><path d="M7 5h7" stroke="#222" strokeDasharray="2 1" /><polygon points="6,5 10,2 10,8" fill="#222" /></svg>
      </div>
      <div className="w-[149px] h-[20px] flex items-center flex-none bg-[#e8efe8] border-y border-[#c0c0c0] pl-[7px] font-['Liberation_Mono',monospace] text-[14.3px] text-[#5a2a30] whitespace-nowrap">
        <span className="w-[10px] h-[10px] rounded-full bg-[#00c000] border border-[#006000] mr-[6px] flex-none" />
        13666059935 ps
      </div>
      <div className={`w-[21px] h-[20px] flex items-center justify-center flex-none bg-[#e8efe8] ${raised}`}>
        <svg width="15" height="15" viewBox="0 0 15 15" className="block"><path d="M6 13h4V1h4" stroke="#111" fill="none" /><path d="M0 6h7" stroke="#222" strokeDasharray="2 1" /><polygon points="9,6 5,3 5,9" fill="#222" /></svg>
      </div>
      <div className="flex-1 flex justify-center">
        <svg width="8" height="11" viewBox="0 0 8 11" className="block"><polygon points="0,0 8,5.5 0,11" fill="#000" /></svg>
      </div>
    </div>
    <div className="h-[186px] mx-[2px] bg-[#5a64a0] pt-[4px] text-[13.5px] text-[#222]">
      {objRows.map(([n, v, ex]) => (
        <div key={n} className="relative h-[20px] bg-[#bdccdd] border-b border-[#7a8ab2] flex items-center">
          <div className="w-[9px] flex-none" />
          <div className="w-[12px] flex-none">{ex && <Expander />}</div>
          <div className="w-[5px] flex-none" />
          <Diamond />
          <span className="ml-[5px] flex-1">{n}</span>
          <span className="mr-[8px]">{v}</span>
        </div>
      ))}
    </div>
    <HScroll cls="mx-[2px] mt-[4px]" thumbCls="w-[112px]" />
  </div>
);

const ProcessesPane = () => (
  <div className="h-[257px] mt-[8px] bg-[#f0f0f0] flex flex-col flex-none">
    <div className="h-[25px] flex items-center pl-[2px] pr-[3px] text-[13.5px] text-[#222]">
      <Gear />
      <span className="ml-[3px] w-[104px] flex-none whitespace-nowrap">rocesses (Active)</span>
      <div className="ml-[5px] flex-1"><DotPatch /></div>
      <Buttons />
    </div>
    <div className="h-[20px] mx-[2px] flex text-[13.5px] text-[#222]">
      <div className={`w-[15px] flex items-center justify-center flex-none ${raised}`}><Filter /></div>
      <div className={`w-[168px] pl-[2px] flex items-center flex-none ${raised}`}>Name</div>
      <div className={`flex-1 pl-[2px] flex items-center ${raised}`}>Type</div>
    </div>
    <div className="h-[186px] mx-[2px] bg-[#8aa2ff] pt-[5px] text-[13.5px]">
      <div className="h-[19px] bg-[#c0cdda] flex items-center text-[#222]">
        <div className="w-[26px] flex-none" />
        <Ball />
        <span className="ml-[7px] w-[138px] flex-none">#INITIAL#82</span>
        <span>Initial</span>
      </div>
      <div className="h-[20px] flex items-center text-[#e2e9ff] overflow-hidden">
        <div className="w-[26px] flex-none" />
        <Ball />
        <span className="ml-[7px] w-[138px] flex-none">#ALWAYS#24</span>
        <span>Alway</span>
      </div>
    </div>
    <HScroll cls="mx-[2px] mt-[4px]" thumbCls="w-[52px]" />
  </div>
);

const waveRows = [
  { n: '/testbench/clk', v: "1'h1", h: 'h-[31px]' },
  { n: '/testbench/rst_n', v: "1'h1", h: 'h-[32px]' },
  { n: '/testbench/row_out', v: "4'b1101", h: 'h-[31px]', ex: 'minus' },
  { n: '[3]', v: "1'b1", h: 'h-[21px]', sub: true },
  { n: '[2]', v: "1'b1", h: 'h-[21px]', sub: true },
  { n: '[1]', v: "1'b0", h: 'h-[22px]', sub: true },
  { n: '[0]', v: "1'b1", h: 'h-[21px]', sub: true },
  { n: '/testbench/col_in', v: "4'b1111", h: 'h-[31px]', ex: 'plus' },
  { n: '/testbench/key_down', v: "1'h1", h: 'h-[31px]' },
  { n: '/testbench/key_code', v: "4'b1001", h: 'h-[32px]', ex: 'plus' },
  { n: '/testbench/force_t...', v: "1'h1", h: 'h-[31px]' },
];

function Lock() {
  return (
    <div className="flex items-center gap-[1px] flex-none">
      <Svg w={14} h={16}><path d="M3 8V5c0-4 7-4 7 0" fill="none" stroke="#b0b0b0" strokeWidth="1.5" /><rect x="1" y="8" width="11" height="7" fill="#e0a030" /></Svg>
      <Svg w={13} h={16}><path d="M1 14l7-7" stroke="#6090e0" strokeWidth="2.5" /><path d="M7 7c0-3 3-5 5-4l-2 3 2 1c0 2-3 2-5 0" fill="#6090e0" /></Svg>
      <Svg w={13} h={14}><circle cx="6.5" cy="7" r="6" fill="#e05858" /><path d="M3.5 7h6" stroke="#fff" strokeWidth="2" /></Svg>
    </div>
  );
}

const NameCol = () => (
  <div className="w-[199px] flex-none flex flex-col">
    <div className="h-[24px] bg-[#808080] flex items-center pl-[10px]">
      <ObjIcon />
      <div className="ml-[2px] mt-[6px]"><IC.caret /></div>
    </div>
    <div className="h-[340px] bg-white relative text-[14px] text-[#222]">
      <svg width="60" height="110" viewBox="0 0 60 110" className="absolute left-[40px] top-[100px]">
        <path d="M7.5 0v102M7.5 18h14M7.5 39h14M7.5 60h14M7.5 81h14M7.5 102h14" stroke="#c0c0c0" fill="none" />
      </svg>
      <div className="h-[5px] ml-[11px] border-b-2 border-[#a0a0a0]" />
      {waveRows.map((r) => (
        <div key={r.n} className={`relative flex items-center pb-[2px] ${r.h}`}>
          <div className="w-[17px] flex-none" />
          <div className="w-[12px] flex-none">{r.ex && <Expander minus={r.ex === 'minus'} />}</div>
          <div className="w-[7px] flex-none" />
          {r.sub && <div className="w-[23px] flex-none" />}
          <Diamond />
          <span className={r.sub ? 'ml-[7px]' : 'ml-[6px]'}>{r.n}</span>
          <div className="absolute left-[11px] right-0 bottom-0 h-[1px] bg-[#b4b4b4]" />
        </div>
      ))}
      <div className="h-px ml-[11px] mr-[4px] bg-[#333]" />
      <div className="h-[29px] ml-[11px] bg-[#808080]" />
      <svg width="6" height="8" viewBox="0 0 6 8" className="absolute left-[11px] top-[305px]"><polygon points="0,0 6,4 0,8" fill="#333" /></svg>
    </div>
    <div className="h-[71px] bg-[#808080] text-[13.5px] text-[#f4f4f4] flex flex-col mt-[3px]">
      <div className="h-[28px] flex items-center pl-[11px] pr-[12px]">
        <Svg w={16} h={16}><path d="M2 12c1-4 2-5 4-5s3 1 4 5" fill="#a8a8a8" /><circle cx="6" cy="4" r="2.5" fill="#a8a8a8" /><path d="M1 13h13" stroke="#6090e0" strokeWidth="1.5" /></Svg>
        <Svg w={15} h={16}><rect x="0.5" y="2" width="13" height="11" fill="#5e98e8" stroke="#3a70c0" /><path d="M3 5h8M3 8h8" stroke="#e0e8f8" /></Svg>
        <Svg w={15} h={15}><circle cx="7.5" cy="7.5" r="6.5" fill="#68bc68" /><path d="M4 7.5h7M7.5 4v7" stroke="#fff" strokeWidth="2" /></Svg>
        <span className="ml-auto">Now</span>
      </div>
      <div className="h-[22px] flex items-center pl-[13px] pr-[12px] pt-[2px]">
        <Lock />
        <span className="ml-auto">Cursor 1</span>
      </div>
      <div className="h-[21px] flex items-center pl-[13px]">
        <Lock />
        <span className="ml-[5px] flex-1 h-full bg-white text-[#222] flex items-center justify-end pr-[12px]">Cursor 2</span>
      </div>
    </div>
    <div className="h-[20px] mt-[3px] ml-[11px] mr-[2px] flex items-stretch bg-[#808080]">
      <Arrow dir="l" cls="w-[19px]" />
      <div className={`${raised} w-[135px]`} />
      <div className={`flex-1 ${dither}`} />
      <Arrow dir="r" cls="w-[20px]" />
    </div>
  </div>
);

const MsgCol = () => (
  <div className="w-[60px] flex-none flex flex-col">
    <div className="h-[24px] bg-[#808080] text-[13.5px] text-[#e8e8e8] flex items-center justify-end pr-[7px]">Msgs</div>
    <div className="h-[340px] bg-white text-[14px] text-[#222]">
      <div className="h-[5px] border-b-2 border-[#a0a0a0]" />
      {waveRows.map((r) => (
        <div key={r.n} className={`pl-[4px] pb-[2px] flex items-center whitespace-nowrap border-b border-[#b4b4b4] ${r.h}`}>{r.v}</div>
      ))}
      <div className="h-px bg-[#333]" />
      <div className="h-[29px] bg-[#808080]" />
    </div>
    <div className="h-[71px] mt-[3px] bg-[#808080] text-[13.5px] text-[#f4f4f4] flex flex-col items-end overflow-hidden whitespace-nowrap">
      <div className="h-[28px] w-full flex items-center justify-end pr-[7px]">0000 ns</div>
      <div className="h-[22px] w-full flex items-center justify-end pr-[7px] pt-[2px]">0.00 ns</div>
      <div className="h-[21px] w-full flex items-center justify-end pr-[7px] bg-white text-[#222]">.935 ns</div>
    </div>
    <div className="h-[20px] mt-[3px] flex items-stretch">
      <Arrow dir="l" dim cls="w-[19px]" />
      <div className={`flex-1 ${dither}`} />
      <Arrow dir="r" dim cls="w-[19px]" />
    </div>
  </div>
);

const GRID = [791, 864, 938, 1012, 1085, 1159, 1234, 1308, 1381, 1456, 1529, 1604, 1678, 1752, 1825];
const X0 = 773;
const X1 = 1886;
const CUR = 1061;

const BUS_VALS = ['1011', '0111', '1110', '1101'];

// one digital signal from its hi and low levels and the spans it sits low
const Digital = ({ hi, lo, lows, color }) => {
  let d = `M${X0} ${lows[0][0] <= X0 ? lo : hi}`;
  lows.forEach(([a, b]) => {
    if (a > X0) d += `H${a}V${lo}`;
    if (b < X1) d += `H${b}V${hi}`;
  });
  d += `H${X1}`;
  return <path d={d} fill="none" stroke={color} strokeWidth="1.5" />;
};

const Bus = ({ top, bot, color, marks, labels }) => (
  <g>
    <path d={`M${X0} ${top}H${X1}M${X0} ${bot}H${X1}`} stroke={color} strokeWidth="1.5" />
    {marks.map((x) => (
      <path key={x} d={`M${x - 1.5} ${top}L${x} ${top + 4}L${x + 1.5} ${top}M${x - 1.5} ${bot}L${x} ${bot - 4}L${x + 1.5} ${bot}`} stroke={color} fill="none" />
    ))}
    {labels.map(([x, t]) => (
      <text key={x} x={x} y={(top + bot) / 2 + 5} fontFamily="Liberation Sans" fontSize="13" fill="#ececec">{t}</text>
    ))}
  </g>
);

const rowLabels = GRID.map((x, i) => [x + 6, BUS_VALS[i % 4]]);

const WaveCanvas = () => (
  <svg width="1121" height="337" viewBox="769 231 1121 337" className="block bg-black">
    {GRID.map((x) => (
      <path key={x} d={`M${x} 231V568`} stroke="#808080" />
    ))}
    <rect x="772" y="242" width="1114" height="14" fill="#33ff11" />
    <path d={`M${X0} 272H${X1}`} stroke="#10a010" strokeWidth="1.5" />
    <Bus top={303} bot={318} color="#c88a00" marks={GRID} labels={rowLabels} />
    <Digital hi={329} lo={344} color="#e09000" lows={[[864, 938], [1159, 1234], [1456, 1529], [1752, 1825]]} />
    <Digital hi={351} lo={366} color="#d88a00" lows={[[791, 864], [1085, 1159], [1381, 1456], [1678, 1752]]} />
    <Digital hi={372} lo={387} color="#b07a00" lows={[[773, 791], [1012, 1085], [1308, 1381], [1604, 1678]]} />
    <Digital hi={393} lo={408} color="#c88400" lows={[[938, 1012], [1234, 1308], [1529, 1604], [1825, 1886]]} />
    <Bus
      top={419}
      bot={434}
      color="#a8e8a0"
      marks={[791, 864, 1085, 1159, 1381, 1456, 1678, 1752]}
      labels={[[797, '1101'], [870, '1111'], [1091, '1101'], [1165, '1111'], [1387, '1101'], [1462, '1111'], [1684, '1101'], [1758, '1111']]}
    />
    <path d={`M${X0} 466H938V451H${X1}`} fill="none" stroke="#c80000" strokeWidth="1.5" />
    <Bus top={482} bot={497} color="#78a878" marks={[938]} labels={[[778, '0000'], [945, '1001']]} />
    <path d={`M${X0} 513H${X1}`} stroke="#10c010" strokeWidth="1.5" />
    <rect x={CUR - 2} y="231" width="4" height="337" fill="#ffcc00" />
    <rect x={CUR - 2} y="242" width="4" height="14" fill="#c82020" />
  </svg>
);

const ticks = Array.from({ length: 38 }, (_, i) => 790.6 + i * 29.55);

const RulerCanvas = () => (
  <svg width="1121" height="71" viewBox="769 571 1121 71" className="block bg-black">
    {ticks.map((x, i) => (
      <path key={x} d={`M${x} ${i % 5 === 0 ? 572 : 575}V581`} stroke="#10d010" />
    ))}
    {[[938, '12000000 ns'], [1234, '16000000 ns'], [1529, '20000000 ns'], [1825, '24000000 ns']].map(([x, t]) => (
      <text key={t} x={x} y="596" textAnchor="middle" fontFamily="Liberation Sans" fontSize="13.5" fill="#10d010">{t}</text>
    ))}
    <path d={`M772 599H${X1}M772 621H${X1}`} stroke="#808080" strokeWidth="1.2" />
    <path d={`M772 611H864M968 611H${CUR}`} stroke="#d8d8d8" strokeWidth="1.2" />
    <text x="916" y="616" textAnchor="middle" fontFamily="Liberation Sans" fontSize="13.5" fill="#e4e4e4">13666059.935 ns</text>
    <rect x={CUR - 2} y="571" width="4" height="51" fill="#ffcc00" />
    <rect x="1007.5" y="622.5" width="109" height="18" fill="#000" stroke="#c8a000" />
    <text x="1062" y="636" textAnchor="middle" fontFamily="Liberation Sans" fontSize="13.5" fill="#d8aa00">13666059.935 ns</text>
  </svg>
);

const WaveCol = () => (
  <div className="w-[1121px] flex-none flex flex-col">
    <div className="h-[24px] bg-black flex">
      <div className="w-[290px] flex-none" />
      <div className="w-[4px] h-[22px] mt-[2px] bg-[#ffcc00]" />
    </div>
    <div className="h-[3px] bg-white" />
    <WaveCanvas />
    <div className="h-[3px] bg-white" />
    <RulerCanvas />
    <div className="h-[20px] mt-[3px] flex items-stretch bg-[#c8c8c8]">
      <Arrow dir="l" cls="w-[18px]" />
      <div className="w-px bg-[#f0c000]" />
      <div className="w-[273px] flex-none" />
      <div className={`w-[423px] flex-none relative ${raised}`}>
        <div className="absolute left-[112px] top-0 bottom-0 w-px bg-[#f0c040]" />
      </div>
      <div className="flex-1" />
      <Arrow dir="r" cls="w-[18px] mr-[3px]" />
    </div>
  </div>
);

const WaveRightCol = () => (
  <div className="w-[26px] ml-[3px] flex-none flex flex-col">
    <div className="h-[24px] bg-[#808080]" />
    <div className="h-[3px]" />
    <div className="h-[337px] flex flex-col">
      <Arrow dir="u" cls="w-[19px] h-[19px] mx-auto mt-[2px]" />
      <div className="w-[19px] mx-auto h-[274px] bg-white" />
      <div className="w-[19px] mx-auto h-[20px] bg-[#f0f0f0]" />
      <Arrow dir="d" cls="w-[19px] h-[19px] mx-auto mt-[1px]" />
    </div>
    <div className="h-[3px]" />
    <div className="h-[71px] bg-[#808080]" />
    <div className="h-[20px] mt-[3px] bg-[#808080]" />
  </div>
);

const WavePane = () => (
  <div className="w-[1416px] ml-[12px] mt-[3px] flex-none">
    <div className="h-[24px] bg-[#9fb8d4] flex items-center pl-[3px] pr-[2px] text-[13.5px] text-[#222]">
      <WaveIcon />
      <span className="ml-[5px] w-[95px] flex-none">Wave - Default</span>
      <div className="flex-1 flex items-center gap-[3px] mr-[6px]">
        <BlueLine />
        <DotPatch />
        <BlueLine />
      </div>
      <div className="flex gap-[3px] mr-[4px]"><Buttons /></div>
    </div>
    <div className="flex bg-[#f0f0f0] pl-[2px] pt-[2px] pb-[3px] border-b border-[#d0d0d0]">
      <NameCol />
      <div className="w-[3px] flex-none" />
      <MsgCol />
      <div className="w-[3px] flex-none" />
      <WaveCol />
      <WaveRightCol />
    </div>
    <div className="h-[6px]" />
    <div className="h-[27px] flex bg-[#f0f0f0] border-t border-black">
      <Tab active cls="w-[89px] h-[26px]" icon={<div className="ml-[5px] flex-none"><WaveIcon /></div>} label="Wave" labelCls="ml-[5px]" />
      <Tab
        cls="w-[128px] h-[26px] border-t-0"
        icon={
          <svg width="18" height="22" viewBox="0 0 18 22" className="block ml-[5px] flex-none">
            <rect x="1" y="3" width="13" height="18" fill="#f8f8e8" stroke="#444" />
            <rect x="1" y="12" width="13" height="9" fill="#60c060" />
            <path d="M3 1v4M6 1v4M9 1v4M12 1v4" stroke="#444" />
            <path d="M8 16L16 1" stroke="#e0a020" strokeWidth="2.5" />
            <path d="M15 3l1.5-3" stroke="#c02020" strokeWidth="2.5" />
          </svg>
        }
        label="testbench.v"
        labelCls="ml-[5px]"
      />
      <div className="flex-1" />
      <Arrow dir="l" dim cls="w-[13px] h-[24px]" />
      <Arrow dir="r" dim cls="w-[13px] h-[24px] mr-[1px]" />
    </div>
  </div>
);

const logLines = [
  ['text-[#2222e8]', '# Loading work.clock_div(fast)'],
  ['text-[#222]', '#'],
  ['text-[#222]', '# add wave *'],
  ['text-[#222]', '# view structure'],
  ['text-[#222]', '# .main_pane.structure.interior.cs.body.struct'],
  ['text-[#222]', '# view signals'],
  ['text-[#222]', '# .main_pane.objects.interior.cs.body.tree'],
  ['text-[#222]', '# run -all'],
  ['text-[#2222e8]', '# ** Note: $stop    : C:/FPGA/keyboard_matrix_4x3/testbench.v(95)'],
  ['text-[#2222e8]', '#    Time: 37700 us  Iteration: 0  Instance: /testbench'],
  ['text-[#2f9a4a]', '# Break in Module testbench at C:/FPGA/keyboard_matrix_4x3/testbench.v line 95'],
];

const Transcript = () => (
  <div className="h-[276px] bg-[#f0f0f0] flex flex-col flex-none">
    <div className="h-[24px] flex items-center flex-none text-[13.5px] text-[#222]">
      <div className="flex-1 h-full flex items-center pl-[5px] border-b-2 border-[#222]">
        <Svg w={17} h={20}><path d="M1 20V7c0-8 15-8 15 0v13h-3V9c0-4-9-4-9 0v11z" fill="#555" /><path d="M4 9c0-4 9-4 9 0v11H4z" fill="#ddd" /></Svg>
        <span className="ml-[4px] w-[66px] flex-none">Transcript</span>
        <TitleGrip cls="flex-1" />
      </div>
      <div className="ml-[3px] mr-[4px]"><Buttons /></div>
    </div>
    <div className="flex flex-1 min-h-0">
      <div className="flex-1 ml-[5px] mr-[5px] bg-white border-l-2 border-[#333] overflow-hidden font-['Liberation_Mono',monospace] text-[14.5px] leading-[18.7px] whitespace-pre pl-[2px]">
        <div className="h-[7px] overflow-hidden text-[#2222e8]">
          <div className="-mt-[13px]"># Loading work.keypad_scan(fast)</div>
        </div>
        {logLines.map(([c, t]) => (
          <div key={t} className={`h-[18.7px] ${c}`}>{t}</div>
        ))}
        <div className="h-[18.7px]" />
        <div className="font-['Liberation_Sans',sans-serif] text-[13.5px] text-[#1a1aa0] -ml-[2px]">VSIM 2&gt;</div>
      </div>
      <div className={`w-[20px] mr-[4px] flex flex-col flex-none ${dither}`}>
        <Arrow dir="u" cls="w-[20px] h-[19px]" />
        <div className="flex-1" />
        <div className={`h-[32px] ${raised}`} />
        <Arrow dir="d" cls="w-[20px] h-[20px]" />
      </div>
    </div>
  </div>
);

const StatusBar = () => (
  <div className="h-[30px] bg-[#f0f0f0] flex items-start pt-[5px] text-[13.5px] text-[#222] border-t border-[#c0c0c0]">
    <div className={`w-[248px] h-[23px] ml-[2px] flex items-center pl-[3px] flex-none whitespace-pre ${sunken}`}>Now: 37,700 us  Delta: 0</div>
    <div className={`w-[1420px] h-[23px] ml-[6px] flex items-center pl-[3px] flex-none ${sunken}`}>/testbench/rst_n</div>
    <div className={`w-[211px] h-[23px] ml-[7px] flex items-center justify-center flex-none ${sunken}`}>9762774564 ps to 24818303852</div>
    <svg width="16" height="16" viewBox="0 0 16 16" className="block ml-[10px] mt-[8px] flex-none"><path d="M4 15L15 4M9 15l6-6M13 15l2-2" stroke="#999" /></svg>
  </div>
);

const menuItems = [
  ['File', ''], ['Edit', ''], ['View', ''], ['Compile', ''], ['Simulate', ''], ['Add', ''], ['Wave', ''], ['Tools', ''],
  ['Layout', ''], ['Bookmarks', 'ml-[3px]'], ['Window', '-ml-[2px]'], ['Help', 'ml-[7px]'],
];

export default function App() {
  return (
    <div className="w-[1920px] h-[1020px] overflow-hidden bg-[#f0f0f0] font-['Liberation_Sans',Arial,sans-serif]">
      <div className="h-[29px] flex items-center bg-[#f2f2f2]">
        <svg width="20" height="20" viewBox="0 0 20 20" className="block ml-[2px] flex-none">
          <rect width="20" height="20" fill="#1a1008" />
          <path d="M12 2C6 2 2 7 3 12c1 4 5 5 9 3 4-3 5-8 3-11-1-2-2-2-3-2zM10 13l6 6" fill="none" stroke="#f06010" strokeWidth="3" />
        </svg>
        <span className="ml-[7px] text-[14.5px] text-[#111] pt-[2px]">Questa Intel Starter FPGA Edition-64 2024.3</span>
        <svg width="160" height="20" viewBox="0 0 160 20" className="block ml-auto flex-none">
          <path d="M5 10.5h12" stroke="#222" />
          <rect x="63.5" y="7.5" width="8" height="8" fill="none" stroke="#222" rx="1" />
          <path d="M66 7V5.5h6.5a1 1 0 0 1 1 1V13H72" fill="none" stroke="#222" />
          <path d="M122 4l12 12M134 4l-12 12" stroke="#222" />
        </svg>
      </div>
      <div className="h-[24px] bg-white flex items-center gap-[18px] pl-[9px] pt-[2px] text-[14.5px] text-[#222]">
        {menuItems.map(([m, c]) => (
          <span key={m} className={c}>{m}</span>
        ))}
      </div>
      <div className="h-[2px]" />
      <Row1 />
      <Row2 />
      <Row3 />
      <div className="h-[1px]" />
      <div className="h-[537px] bg-[#c8c8c8] flex items-start">
        <div className="w-[258px] flex-none">
          <SimPane />
          <SimTabs />
        </div>
        <div className="w-[222px] ml-[10px] flex-none">
          <ObjectsPane />
          <ProcessesPane />
        </div>
        <WavePane />
      </div>
      <Transcript />
      <StatusBar />
    </div>
  );
}
